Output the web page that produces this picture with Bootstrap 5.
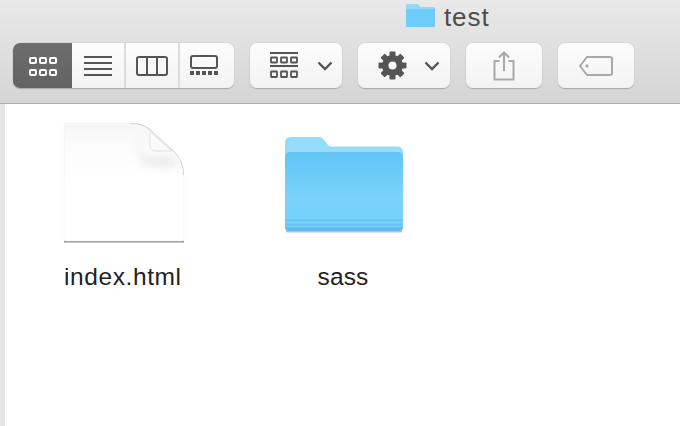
<!doctype html>
<html><head><meta charset="utf-8">
<link href="https://cdn.jsdelivr.net/npm/bootstrap@5.3.0/dist/css/bootstrap.min.css" rel="stylesheet">
<style>
html,body{width:680px;height:426px;overflow:hidden;background:#fff;font-family:"Liberation Sans",Arial,sans-serif}
.chrome{height:104px;background:linear-gradient(#e9e9e9,#d5d5d5);border-bottom:1px solid #adadad}
.titlerow{height:43px;padding-left:405px;gap:8px;color:#4c4c4c;font-size:26px;letter-spacing:.9px;line-height:1}
.titlerow span{margin-top:-10px}
.titlerow svg{margin-top:-12px;filter:drop-shadow(0 .5px .5px #9a9a9a)}
.tools{padding-left:13px;height:45px}
.seg{height:45px;background:linear-gradient(#fdfdfd,#f3f3f3);border-radius:7px;box-shadow:0 1px 1px #a8a8a8,0 0 0 .5px #cfcfcf}
.seg svg{display:block}
.grp{width:221px;margin-right:16px;overflow:hidden}
.gi{height:45px}
.gi1{width:59px;background:linear-gradient(#6d6d6d,#626262)}
.gi2{width:54px;border-right:2px solid #dcdcdc}
.gi3{width:54px;border-right:2px solid #dcdcdc}
.gi4{width:54px;padding-right:6px}
.b92{width:92px;margin-right:16px}
.b76{width:76px;margin-right:16px}
.sp1{margin-left:20px}
.sp2{margin-left:3px}
.sp3{margin-left:17px}
.body{height:322px;border-left:5px solid #e6e6e6;position:relative}
.pane{padding-left:59px;padding-top:19px}
.item{width:120px;color:#222;font-size:24.5px;letter-spacing:.6px;line-height:28px;text-align:center}
.item1{margin-right:101px}
.icon{height:120px}
.icon svg{display:block;overflow:visible}
.lbl{margin-top:20px;white-space:nowrap;padding-right:3px}
.item2{width:118px;letter-spacing:.1px}
.item2 .icon{padding-top:14px}
.item2 .lbl{padding-right:2px}
</style></head><body>
<div class="chrome">
 <div class="titlerow d-flex align-items-center">
  <svg width="31" height="25" viewBox="0 0 31 25"><path d="M1 4Q1 1 3 1H11Q13 1 14 3L15 4H28Q30 4 30 6V22Q30 24 28 24H3Q1 24 1 22Z" fill="#93d9fb"/><path d="M1 7Q1 6 3 6H28Q30 6 30 7V22Q30 24 28 24H3Q1 24 1 22Z" fill="#6fcdf9"/></svg>
  <span>test</span>
 </div>
 <div class="tools d-flex">
  <div class="seg grp d-flex">
   <div class="gi gi1 d-flex align-items-center justify-content-center">
    <svg width="28" height="20" viewBox="0 0 28 20" fill="none" stroke="#fff" stroke-width="2"><rect x="1" y="2" width="6" height="5" rx="1"/><rect x="11" y="2" width="6" height="5" rx="1"/><rect x="21" y="2" width="6" height="5" rx="1"/><rect x="1" y="14" width="6" height="5" rx="1"/><rect x="11" y="14" width="6" height="5" rx="1"/><rect x="21" y="14" width="6" height="5" rx="1"/></svg>
   </div>
   <div class="gi gi2 d-flex align-items-center justify-content-center">
    <svg width="28" height="20" viewBox="0 0 28 20" stroke="#555" stroke-width="2"><path d="M0 1H28M0 7H28M0 13H28M0 19H28"/></svg>
   </div>
   <div class="gi gi3 d-flex align-items-center justify-content-center">
    <svg width="32" height="20" viewBox="0 0 32 20" fill="none" stroke="#555" stroke-width="2"><rect x="1" y="1" width="30" height="18" rx="2"/><path d="M11 1V19M21 1V19"/></svg>
   </div>
   <div class="gi gi4 d-flex align-items-center justify-content-center">
    <svg width="28" height="21" viewBox="0 0 28 21"><rect x="1" y="1" width="26" height="12" rx="2" fill="none" stroke="#555" stroke-width="2"/><path d="M0 16h4v4H0zM6 16h4v4H6zM12 16h4v4h-4zM18 16h4v4h-4zM24 16h4v4h-4z" fill="#555"/></svg>
   </div>
  </div>
  <div class="seg b92 d-flex align-items-center">
   <svg class="sp1" width="44" height="27" viewBox="0 0 44 27" fill="none" stroke="#555" stroke-width="2"><path d="M0 1H28"/><rect x="1" y="5.500" width="6" height="5" stroke-width="1.800" rx=".5"/><rect x="11" y="5.500" width="6" height="5" stroke-width="1.800" rx=".5"/><rect x="21" y="5.500" width="6" height="5" stroke-width="1.800" rx=".5"/><path d="M0 14H28"/><rect x="1" y="19.500" width="6" height="5.500" stroke-width="1.800" rx=".5"/><rect x="11" y="19.500" width="6" height="5.500" stroke-width="1.800" rx=".5"/><rect x="21" y="19.500" width="6" height="5.500" stroke-width="1.800" rx=".5"/></svg>
   <svg class="sp2" width="16" height="10" viewBox="0 0 16 10" fill="none" stroke="#555" stroke-width="2.400"><path d="M1.500 1.500L8 8L14.500 1.500"/></svg>
  </div>
  <div class="seg b92 d-flex align-items-center">
   <svg class="sp1" width="29" height="29" viewBox="0 0 29 29"><g fill="#555"><circle cx="14.500" cy="14.500" r="10.500"/><rect x="11.500" y="0.500" width="6" height="28" rx="1"/><rect x="11.500" y="0.500" width="6" height="28" rx="1" transform="rotate(45 14.500 14.500)"/><rect x="11.500" y="0.500" width="6" height="28" rx="1" transform="rotate(90 14.500 14.500)"/><rect x="11.500" y="0.500" width="6" height="28" rx="1" transform="rotate(135 14.500 14.500)"/></g><circle cx="14.500" cy="14.500" r="4" fill="#fafafa"/></svg>
   <svg class="sp3" width="16" height="10" viewBox="0 0 16 10" fill="none" stroke="#555" stroke-width="2.400"><path d="M1.500 1.500L8 8L14.500 1.500"/></svg>
  </div>
  <div class="seg b76 d-flex align-items-center justify-content-center">
   <svg width="22" height="30" viewBox="0 0 22 30" fill="none" stroke="#a9a9a9" stroke-width="2"><path d="M6.500 10H1.500V28.500H20.500V10H15.500"/><path d="M11 20V1.500M6 6.500L11 1.500L16 6.500"/></svg>
  </div>
  <div class="seg b76 d-flex align-items-center justify-content-center">
   <svg width="34" height="20" viewBox="0 0 34 20" fill="none" stroke="#a9a9a9" stroke-width="2"><path d="M8 1H31Q33 1 33 3V17Q33 19 31 19H8L1 10Z" stroke-linejoin="round"/><circle cx="8" cy="10" r="1.700" fill="#a9a9a9" stroke="none"/></svg>
  </div>
 </div>
</div>
<div class="body">
 <div class="pane d-flex">
  <div class="item item1">
   <div class="icon">
    <svg width="120" height="120" viewBox="0 0 120 120">
     <defs>
      <linearGradient id="pg" x1="0" y1="0" x2="0" y2="1"><stop offset="0" stop-color="#f6f6f6"/><stop offset=".2" stop-color="#fcfcfc"/><stop offset=".5" stop-color="#fff"/></linearGradient>
      <linearGradient id="fg" x1="0" y1="0" x2="1" y2="1"><stop offset="0" stop-color="#fff"/><stop offset="1" stop-color="#f6f6f6"/></linearGradient>
      <filter id="bl" x="-50%" y="-50%" width="200%" height="200%"><feGaussianBlur stdDeviation="5"/></filter>
      <filter id="bs" x="-10%" y="-100%" width="120%" height="400%"><feGaussianBlur stdDeviation=".7"/></filter>
      <clipPath id="pc"><path d="M0 0H68Q80 0 88 8L110 28Q120 38 120 52V118H0Z"/></clipPath>
     </defs>
     <rect x="0" y="117" width="120" height="2.500" fill="#8c8c8c" filter="url(#bs)"/>
     <path d="M.2 .2H68Q80 .2 88 8L110 28Q119.800 38 119.800 52V118H.2Z" fill="url(#pg)" stroke="#ededed" stroke-width=".5"/>
     <g clip-path="url(#pc)">
      <path d="M74 10V34H112V44L80 42Z" fill="#e8e8e8" filter="url(#bl)"/>
      <path d="M66 0Q80 0 88 8L110 28Q120 38 120 52" fill="none" stroke="#d2d2d2" stroke-width="1.500"/>
     </g>
     <path d="M86 9L108 28H92Q86 28 86 22Z" fill="url(#fg)" stroke="#dadada" stroke-width=".8"/>
    </svg>
   </div>
   <div class="lbl">index.html</div>
  </div>
  <div class="item item2">
   <div class="icon">
    <svg width="118" height="96" viewBox="0 0 118 96">
     <defs>
      <linearGradient id="fb" x1="0" y1="0" x2="0" y2="1"><stop offset="0" stop-color="#62c4f5"/><stop offset=".6" stop-color="#7bd3fb"/><stop offset="1" stop-color="#74cffa"/></linearGradient>
      <filter id="fs" x="-5%" y="-100%" width="110%" height="400%"><feGaussianBlur stdDeviation=".7"/></filter>
     </defs>
     <rect x="1" y="93" width="116" height="2.500" fill="#b3c6d2" filter="url(#fs)"/>
     <path d="M0 6Q0 0 6 0H33Q37 0 39 3L43 8Q44 9.500 47 9.500H112Q118 9.500 118 15V89Q118 94 112 94H6Q0 94 0 89Z" fill="#96dcfd"/>
     <path d="M0 20Q0 15 6 15H112Q118 15 118 20V89Q118 94 112 94H6Q0 94 0 89Z" fill="url(#fb)"/>
     <path d="M0 83.500H118M0 87.500H118M0 90.500H118" stroke="#68c3f2" stroke-width="1.300"/>
     <path d="M0 91Q0 94 6 94H112Q118 94 118 91Z" fill="#62bceb"/>
    </svg>
   </div>
   <div class="lbl">sass</div>
  </div>
 </div>
</div>
</body></html>
